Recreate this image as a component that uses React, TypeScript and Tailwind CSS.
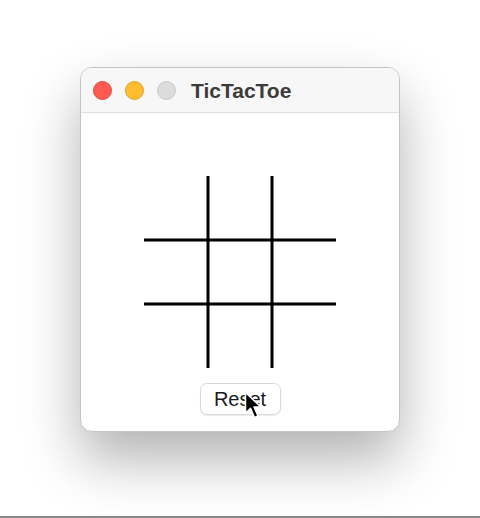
import React from "react";

export default function App() {
  return (
    <div
      className="w-[480px] h-[518px] bg-white flex flex-col overflow-hidden"
      style={{ fontFamily: '"Liberation Sans", Arial, sans-serif' }}
    >
      <div className="flex-1 flex justify-center pt-[67px]">
        <div className="relative w-[320px] h-[365px] rounded-[12px] bg-white border border-[#c4c4c4] shadow-[0_28px_55px_rgba(0,0,0,0.3)] overflow-hidden flex flex-col">
          <div className="h-[45px] bg-[#f7f7f7] border-b border-[#dedede] flex items-center pl-[12px] shrink-0">
            <div className="flex items-center gap-[13px]">
              <div className="w-[19px] h-[19px] rounded-full bg-[#fd5a52] border border-[#e2463f]" />
              <div className="w-[19px] h-[19px] rounded-full bg-[#febc2e] border border-[#e1a325]" />
              <div className="w-[19px] h-[19px] rounded-full bg-[#dcdcdc] border border-[#c9c9c9]" />
            </div>
            <div className="ml-[15px] text-[21px] font-bold text-[#3c3c3c] leading-none">TicTacToe</div>
          </div>
          <div className="flex flex-col items-center pt-[63px]">
            <svg width="192" height="192" viewBox="0 0 192 192">
              <g stroke="#000" strokeWidth="3">
                <line x1="64" y1="0" x2="64" y2="192" />
                <line x1="128" y1="0" x2="128" y2="192" />
                <line x1="0" y1="64" x2="192" y2="64" />
                <line x1="0" y1="128" x2="192" y2="128" />
              </g>
            </svg>
            <div className="relative mt-[15px]">
              <button className="w-[81px] h-[32px] rounded-[7px] bg-white border border-[#d9d9d9] shadow-[0_1px_1px_rgba(0,0,0,0.08)] text-[20px] text-[#1a1a1a] leading-none flex items-center justify-center">
                Reset
              </button>
              <svg
                className="absolute left-[44px] top-[8px]"
                width="20"
                height="30"
                viewBox="0 0 20 30"
              >
                <path
                  d="M1.5 1.5 L1.5 22 L6.5 17.2 L10.5 26.5 L14 25 L10 16 L16.8 16 Z"
                  fill="#000"
                  stroke="#fff"
                  strokeWidth="1.5"
                  strokeLinejoin="round"
                />
              </svg>
            </div>
          </div>
        </div>
      </div>
      <div className="h-[2px] bg-[#8a8a8a] shrink-0" />
    </div>
  );
}
